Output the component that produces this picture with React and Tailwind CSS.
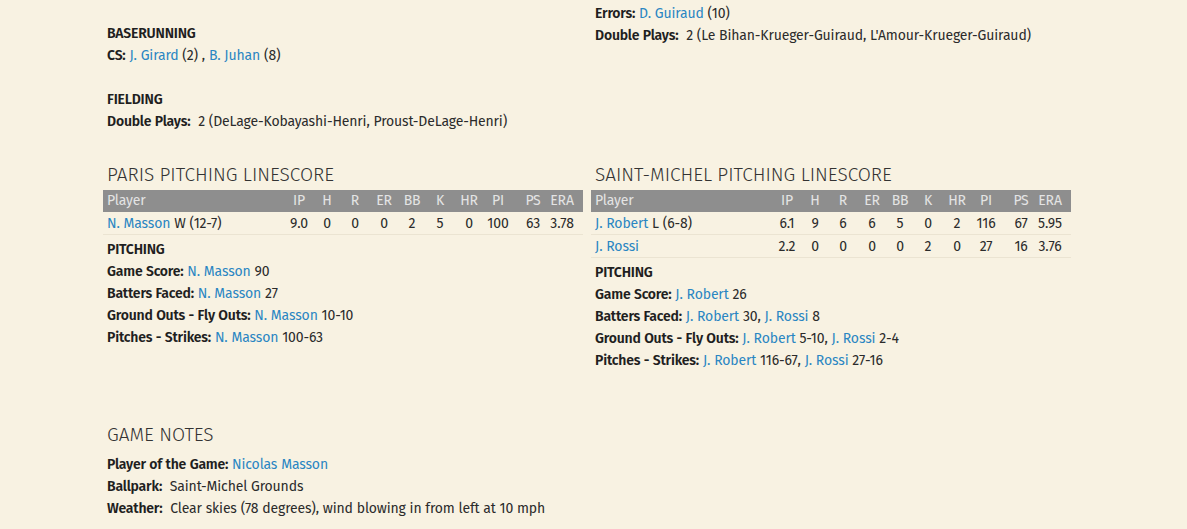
import React from "react";

const L = ({ children }) => <span className="text-[#2a86c2]">{children}</span>;
const B = ({ children }) => <span className="font-semibold tracking-[-0.2px] text-[#1f1f1f]">{children}</span>;
const Line = ({ children }) => <div className="h-[22px] leading-[22px] whitespace-nowrap">{children}</div>;

const cols = "grid grid-cols-[1fr_28px_28px_28px_30px_26px_30px_28px_30px_40px_18px_12px]";
const heads = ["IP", "H", "R", "ER", "BB", "K", "HR", "PI", "PS", "ERA"];

function Table({ rows }) {
  return (
    <div className="mt-[4px]">
      <div className={`${cols} h-[22px] leading-[22px] bg-[#8e8e8e] text-[#e4e4e4]`}>
        <div className="pl-1">Player</div>
        {heads.map((h) => (
          <div key={h} className="flex justify-center whitespace-nowrap">{h}</div>
        ))}
        <div />
      </div>
      {rows.map((r, i) => (
        <div key={i} className={`${cols} h-[23px] leading-[23px] border-b border-[#ebe4d2]`}>
          <div className="pl-1 whitespace-nowrap">
            <L>{r.name}</L>
            {r.dec ? <span> {r.dec}</span> : null}
          </div>
          {r.v.map((v, j) => (
            <div key={j} className="flex justify-center whitespace-nowrap">{v}</div>
          ))}
          <div />
        </div>
      ))}
    </div>
  );
}

const H = ({ children }) => (
  <div className="px-1 h-[22px] leading-[22px] text-[19px] font-light tracking-normal [word-spacing:0px] text-[#333] whitespace-nowrap">
    {children}
  </div>
);

export default function App() {
  return (
    <div
      className="w-[1187px] h-[529px] overflow-hidden bg-[#f8f2e2] text-[14px] tracking-[-0.14px] [word-spacing:0.3px] text-[#2b2b2b]"
      style={{ fontFamily: '"Fira Sans", "Open Sans", "Noto Sans", sans-serif' }}
    >
      <div className="ml-[103px] w-[968px] pt-[1px]">
        <div className="grid grid-cols-2 gap-2">
          <div className="pt-[22px] px-1">
            <Line><B>BASERUNNING</B></Line>
            <Line>
              <B>CS:</B> <L>J. Girard</L> (2) , <L>B. Juhan</L> (8)
            </Line>
            <Line>{"\u00a0"}</Line>
            <Line><B>FIELDING</B></Line>
            <Line>
              <B>Double Plays:</B>{"\u00a0 "}2 (DeLage-Kobayashi-Henri, Proust-DeLage-Henri)
            </Line>
          </div>
          <div className="pt-[2px] px-1">
            <Line>
              <B>Errors:</B> <L>D. Guiraud</L> (10)
            </Line>
            <Line>
              <B>Double Plays:</B>{"\u00a0 "}2 (Le Bihan-Krueger-Guiraud, L'Amour-Krueger-Guiraud)
            </Line>
          </div>
        </div>

        <div className="grid grid-cols-2 gap-2 mt-[31px]">
          <div>
            <H>PARIS PITCHING LINESCORE</H>
            <Table
              rows={[
                { name: "N. Masson", dec: "W (12-7)", v: ["9.0", "0", "0", "0", "2", "5", "0", "100", "63", "3.78"] },
              ]}
            />
            <div className="mt-[3px] px-1 pt-[1px]">
              <Line><B>PITCHING</B></Line>
              <Line><B>Game Score:</B> <L>N. Masson</L> 90</Line>
              <Line><B>Batters Faced:</B> <L>N. Masson</L> 27</Line>
              <Line><B>Ground Outs - Fly Outs:</B> <L>N. Masson</L> 10-10</Line>
              <Line><B>Pitches - Strikes:</B> <L>N. Masson</L> 100-63</Line>
            </div>
          </div>
          <div>
            <H>SAINT-MICHEL PITCHING LINESCORE</H>
            <Table
              rows={[
                { name: "J. Robert", dec: "L (6-8)", v: ["6.1", "9", "6", "6", "5", "0", "2", "116", "67", "5.95"] },
                { name: "J. Rossi", v: ["2.2", "0", "0", "0", "0", "2", "0", "27", "16", "3.76"] },
              ]}
            />
            <div className="mt-[3px] px-1 pt-[1px]">
              <Line><B>PITCHING</B></Line>
              <Line><B>Game Score:</B> <L>J. Robert</L> 26</Line>
              <Line><B>Batters Faced:</B> <L>J. Robert</L> 30, <L>J. Rossi</L> 8</Line>
              <Line><B>Ground Outs - Fly Outs:</B> <L>J. Robert</L> 5-10, <L>J. Rossi</L> 2-4</Line>
              <Line><B>Pitches - Strikes:</B> <L>J. Robert</L> 116-67, <L>J. Rossi</L> 27-16</Line>
            </div>
          </div>
        </div>

        <div className="mt-[52px]">
          <H>GAME NOTES</H>
          <div className="mt-[8px] px-1">
            <Line><B>Player of the Game:</B> <L>Nicolas Masson</L></Line>
            <Line><B>Ballpark:</B>{"\u00a0 "}Saint-Michel Grounds</Line>
            <Line><B>Weather:</B>{"\u00a0 "}Clear skies (78 degrees), wind blowing in from left at 10 mph</Line>
          </div>
        </div>
      </div>
    </div>
  );
}
